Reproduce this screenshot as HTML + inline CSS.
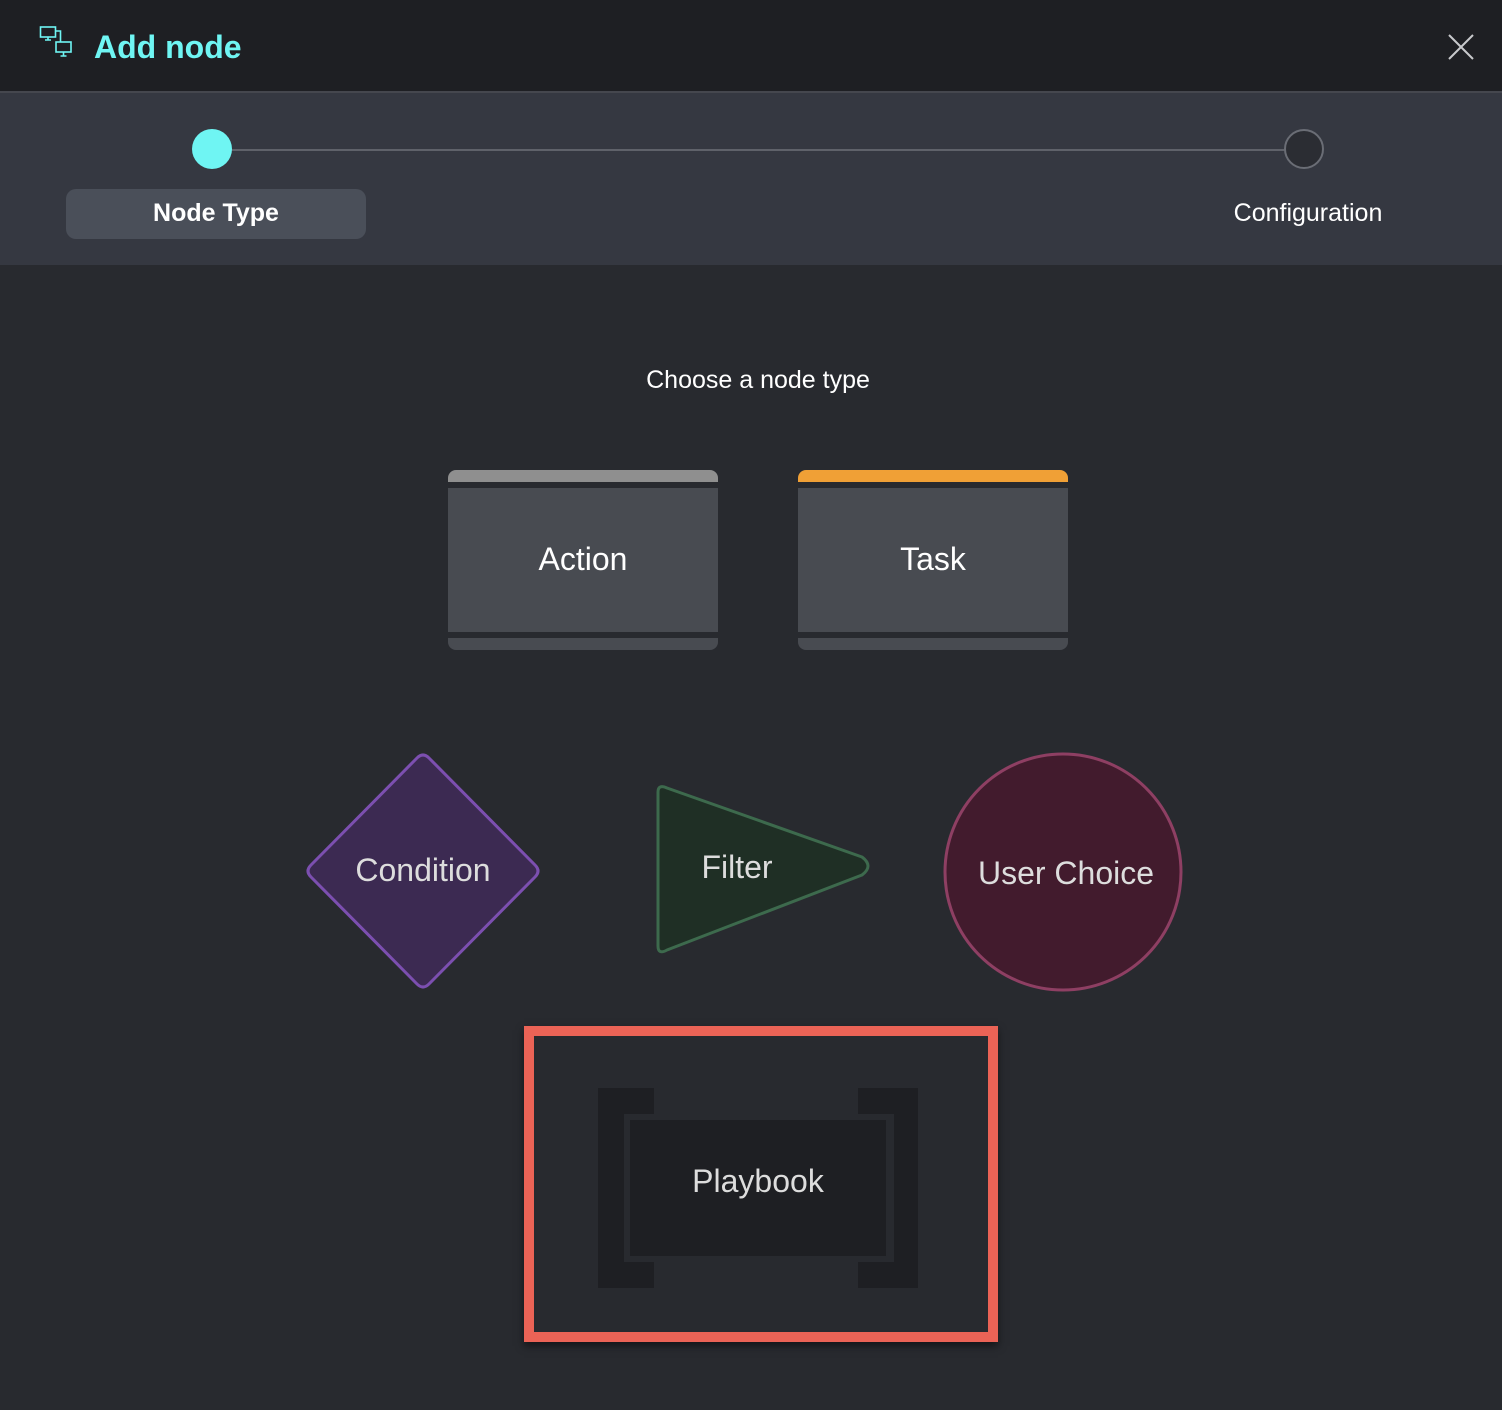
<!DOCTYPE html>
<html><head><style>
body{margin:0;width:1502px;height:1410px;background:#282a2f;font-family:"Liberation Sans",sans-serif;position:relative;overflow:hidden}
.hdr{position:absolute;left:0;top:0;width:1502px;height:91px;background:#1e1f23;border-bottom:2px solid #45474e}
.step{position:absolute;left:0;top:93px;width:1502px;height:172px;background:#353841}
.abs{position:absolute}
.card{position:absolute;width:270px}
</style></head><body>
<div class="hdr">
<svg class="abs" style="left:38px;top:25px" width="38" height="38" viewBox="0 0 38 38" fill="none" stroke="#6ff5f3" stroke-width="1.6">
<rect x="2.5" y="2" width="15" height="10"/><path d="M7 15h6M10 12v3M17.5 6h5v11"/>
<rect x="18" y="17" width="15" height="10"/><path d="M22.5 31h6M25.5 27v4"/>
</svg>
<div class="abs" style="left:94px;top:29px;color:#6ff5f3;font-size:32px;font-weight:bold">Add node</div>
<svg class="abs" style="left:1447px;top:33px" width="28" height="28" viewBox="0 0 28 28" stroke="#c8c9cc" stroke-width="2"><path d="M2 2L26 26M26 2L2 26"/></svg>
</div>
<div class="step">
<div class="abs" style="left:231px;top:56px;width:1054px;height:2px;background:#5f626a"></div>
<div class="abs" style="left:192px;top:36px;width:40px;height:40px;border-radius:50%;background:#6ff5f3"></div>
<div class="abs" style="left:1284px;top:36px;width:36px;height:36px;border-radius:50%;border:2px solid #6a6d75;background:#2b2d33"></div>
<div class="abs" style="left:66px;top:96px;width:300px;height:50px;border-radius:10px;background:#4a4f59;color:#fff;font-weight:bold;font-size:25px;text-align:center;line-height:48px">Node Type</div>
<div class="abs" style="left:1190px;top:96px;width:236px;text-align:center;color:#fff;font-size:25px;line-height:48px">Configuration</div>
</div>
<div class="abs" style="left:0;top:366px;width:1516px;text-align:center;color:#fff;font-size:25px">Choose a node type</div>

<div class="card" style="left:448px;top:470px">
<div style="height:12px;background:#8f8f8f;border-radius:8px 8px 0 0"></div>
<div style="margin-top:6px;height:144px;background:#484b51;color:#fff;font-size:32px;text-align:center;line-height:142px">Action</div>
<div style="margin-top:6px;height:12px;background:#484b51;border-radius:0 0 8px 8px"></div>
</div>
<div class="card" style="left:798px;top:470px">
<div style="height:12px;background:#f0a036;border-radius:8px 8px 0 0"></div>
<div style="margin-top:6px;height:144px;background:#484b51;color:#fff;font-size:32px;text-align:center;line-height:142px">Task</div>
<div style="margin-top:6px;height:12px;background:#484b51;border-radius:0 0 8px 8px"></div>
</div>

<svg class="abs" style="left:0;top:0" width="1502" height="1410">
<path d="M417 758 Q423 752 429 758 L535 865 Q541 871 535 877 L429 984 Q423 990 417 984 L311 877 Q305 871 311 865 Z" fill="#3c2a52" stroke="#7c4fb0" stroke-width="3" stroke-linejoin="round"/>
<path d="M658 792 Q658 784 667 788 L862 857 Q874 866 862 875 L667 950 Q658 955 658 946 Z" fill="#1f2f25" stroke="#3d6a4d" stroke-width="3" stroke-linejoin="round"/>
<circle cx="1063" cy="872" r="118" fill="#421b2d" stroke="#8e3f63" stroke-width="3"/>
<text x="423" y="881" text-anchor="middle" fill="#ddd" font-size="32" font-family="Liberation Sans">Condition</text>
<text x="737" y="878" text-anchor="middle" fill="#ddd" font-size="32" font-family="Liberation Sans">Filter</text>
<text x="1066" y="884" text-anchor="middle" fill="#ddd" font-size="32" font-family="Liberation Sans">User Choice</text>
</svg>

<div class="abs" style="left:524px;top:1026px;width:454px;height:296px;border:10px solid #eb6356;box-shadow:0 4px 8px rgba(0,0,0,.5)"></div>
<div class="abs" style="left:598px;top:1088px;width:56px;height:200px;background:#1e1f23"></div>
<div class="abs" style="left:858px;top:1088px;width:60px;height:200px;background:#1e1f23"></div>
<div class="abs" style="left:624px;top:1114px;width:270px;height:148px;background:#282a2f"></div>
<div class="abs" style="left:630px;top:1120px;width:256px;height:136px;background:#1e1f23;color:#ddd;font-size:32px;text-align:center;line-height:122px">Playbook</div>
</body></html>
